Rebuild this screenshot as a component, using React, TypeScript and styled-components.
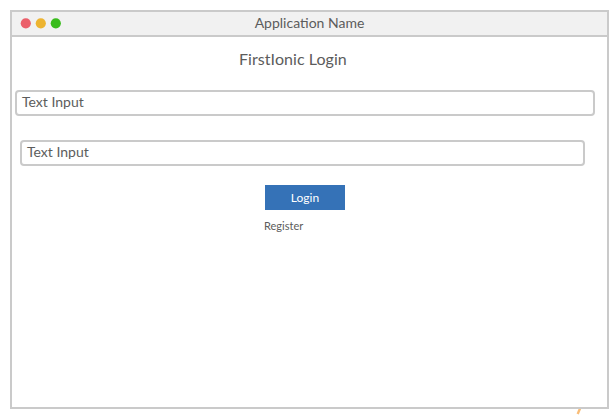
import React from "react";
import styled, { createGlobalStyle } from "styled-components";

const GlobalStyle = createGlobalStyle`
  * { box-sizing: border-box; }
  body { margin: 0; background: #fff; font-family: Lato, sans-serif; color: #5c5c5c; }
`;

const Page = styled.div`
  position: relative;
  width: 614px;
  height: 418px;
  padding: 10px 5px 9px 10px;
  overflow: hidden;
`;

const Window = styled.main`
  height: 399px;
  width: 599px;
  border: 2px solid #cacaca;
  background: #fff;
  display: flex;
  flex-direction: column;
`;

const TitleBar = styled.header`
  height: 25px;
  flex: none;
  background: #f1f1f1;
  border-bottom: 2px solid #cacaca;
  display: grid;
  grid-template-columns: 60px 1fr 60px;
  align-items: center;
`;

const Lights = styled.svg`
  display: block;
  width: 60px;
  height: 23px;
`;

const AppName = styled.div`
  text-align: center;
  font-size: 14px;
  line-height: 20px;
  padding-bottom: 2px;
`;

const Heading = styled.h1`
  margin: 12px 0 0 227px;
  font-size: 16px;
  font-weight: 400;
  line-height: 20px;
  letter-spacing: 0.06px;
`;

const Field = styled.div<{ $width: number; $left: number; $top: number }>`
  width: ${(p) => p.$width}px;
  height: 26px;
  margin: ${(p) => p.$top}px 0 0 ${(p) => p.$left}px;
  padding: 0 5px;
  border: 2px solid #cacaca;
  border-radius: 4px;
  font-size: 14px;
  line-height: 20px;
`;

const Button = styled.button`
  width: 80px;
  height: 25px;
  margin: 19px 0 0 253px;
  padding: 0;
  border: 0;
  background: #3572b7;
  color: #fff;
  font: 400 12px/25px Lato, sans-serif;
`;

const Register = styled.a`
  margin: 9px 0 0 252px;
  font-size: 11px;
  line-height: 14px;
`;

const Stroke = styled.svg`
  position: absolute;
  left: 574px;
  top: 409px;
`;

export default function App() {
  return (
    <Page>
      <GlobalStyle />
      <Window>
        <TitleBar>
          <Lights viewBox="0 0 60 23">
            <circle cx="13.8" cy="11.3" r="5.1" fill="#eb5f6a" />
            <circle cx="28.8" cy="11.3" r="5.1" fill="#edb431" />
            <circle cx="43.8" cy="11.3" r="5.1" fill="#39bc1c" />
          </Lights>
          <AppName>Application Name</AppName>
        </TitleBar>
        <Heading>FirstIonic Login</Heading>
        <Field $width={580} $left={3} $top={21}>Text Input</Field>
        <Field $width={565} $left={8} $top={24}>Text Input</Field>
        <Button>Login</Button>
        <Register>Register</Register>
      </Window>
      <Stroke width="10" height="6" viewBox="0 0 10 6">
        <path d="M6.2 -1 L3.7 5" stroke="#f9bd78" strokeWidth="2.4" />
      </Stroke>
    </Page>
  );
}
